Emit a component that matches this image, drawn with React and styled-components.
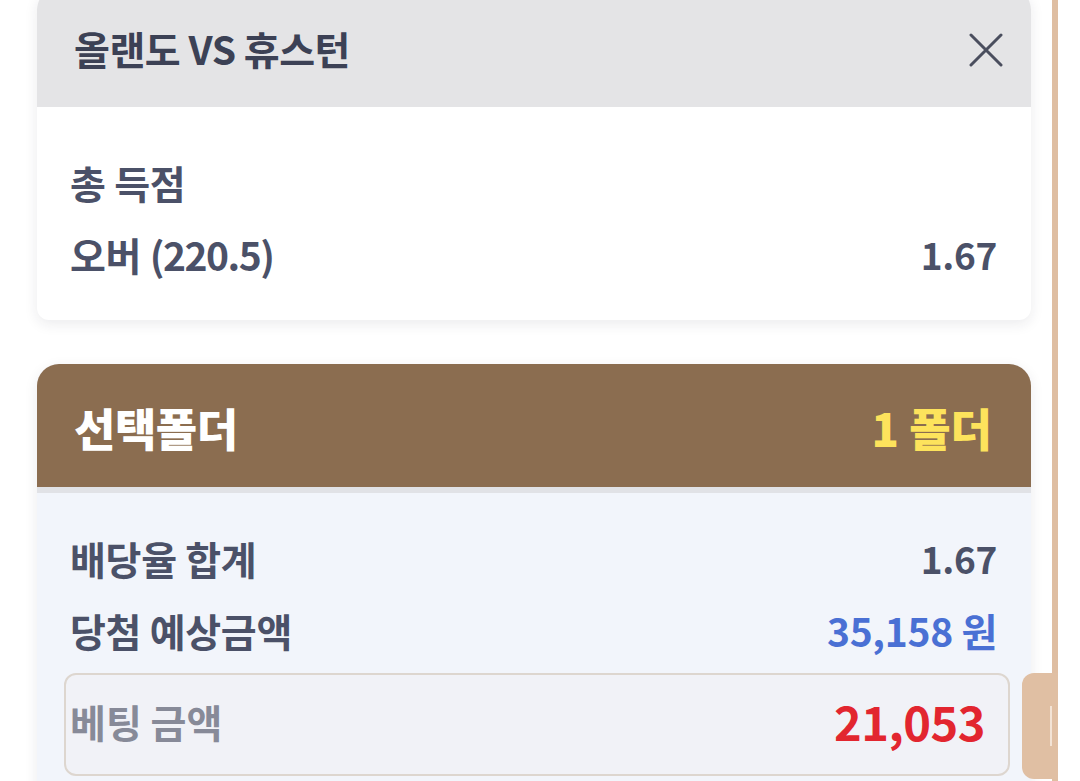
import React from "react";
import styled, { createGlobalStyle } from "styled-components";

const GlobalStyle = createGlobalStyle`
  html, body { margin: 0; padding: 0; background: #ffffff; }
  body { font-family: "Noto Sans CJK KR", "Noto Sans", sans-serif; }
  * { box-sizing: border-box; }
`;

const Page = styled.div`
  display: flex;
  width: 1080px;
  height: 781px;
  overflow: hidden;
  background: #ffffff;
`;

const Column = styled.div`
  width: 1052px;
  flex: none;
  padding: 0 21px 0 37px;
  display: flex;
  flex-direction: column;
  gap: 44px;
`;

const Rail = styled.div`
  width: 6px;
  flex: none;
  background: #dfbea2;
`;

const Card = styled.section`
  background: ${(p) => p.$bg || "#ffffff"};
  border-radius: ${(p) => p.$radius};
  box-shadow: 0 4px 14px rgba(30, 35, 60, 0.09);
  margin-top: ${(p) => p.$mt || "0"};
`;

const MatchHeader = styled.header`
  height: 119px;
  padding: 0 28px 0 37px;
  background: #e4e4e6;
  border-radius: 22px 22px 0 0;
  display: flex;
  align-items: center;
  justify-content: space-between;
`;

const MatchTitle = styled.h2`
  margin: 0;
  font-size: 39px;
  font-weight: 700;
  color: #3c4155;
  letter-spacing: -0.5px;
`;

const CloseButton = styled.button`
  border: 0;
  background: transparent;
  padding: 0;
  width: 34px;
  height: 34px;
  display: flex;
  margin-top: 4px;
`;

const Body = styled.div`
  height: ${(p) => p.$h};
  padding: ${(p) => p.$pad};
  display: flex;
  flex-direction: column;
  gap: 32px;
`;

const Row = styled.div`
  display: flex;
  justify-content: space-between;
  align-items: center;
  height: 40px;
  font-size: 39px;
  font-weight: 700;
  color: #4b5168;
  letter-spacing: -0.3px;
`;

const Numbers = styled.span`
  letter-spacing: -1.5px;
`;

const Value = styled.span`
  color: ${(p) => p.$color || "#4b5168"};
  font-size: ${(p) => p.$size || "37px"};
`;

const FolderHeader = styled.header`
  height: 129px;
  padding: 4px 39px 0 37px;
  background: #8b6d50;
  border-radius: 22px 22px 0 0;
  border-bottom: 6px solid #e1e2e6;
  display: flex;
  align-items: center;
  justify-content: space-between;
`;

const FolderTitle = styled.h2`
  margin: 0;
  font-size: 45px;
  font-weight: 900;
  color: #ffffff;
  letter-spacing: -0.5px;
`;

const FolderCount = styled.span`
  font-size: 45px;
  font-weight: 900;
  color: #fde35c;
`;

const InputRow = styled.div`
  display: flex;
  align-items: stretch;
  margin: -9px -13px 0 -6px;
  gap: 12px;
`;

const AmountBox = styled.div`
  flex: 1;
  height: 103px;
  border: 2px solid #ddd6cf;
  border-radius: 12px;
  background: #f1f2f7;
  padding: 0 23px 8px 4px;
  display: flex;
  align-items: center;
  justify-content: space-between;
`;

const AmountLabel = styled.span`
  font-size: 39px;
  font-weight: 700;
  color: #878a98;
`;

const AmountValue = styled.span`
  font-size: 47px;
  font-weight: 700;
  color: #e2262f;
  letter-spacing: -0.5px;
`;

const SideButton = styled.div`
  flex: none;
  width: 36px;
  height: 106px;
  margin-right: -48px;
  background: #e0bfa3;
  border-radius: 12px 0 0 12px;
  position: relative;
  z-index: 1;
  display: flex;
  align-items: center;
  justify-content: flex-end;
  padding-right: 6px;
`;

const Caret = styled.span`
  width: 2px;
  height: 40px;
  background: #f3e3d5;
`;

export default function App() {
  return (
    <>
      <GlobalStyle />
      <Page>
        <Column>
          <Card $radius="22px 22px 12px 12px" $mt="-12px">
            <MatchHeader>
              <MatchTitle>올랜도 VS 휴스턴</MatchTitle>
              <CloseButton aria-label="닫기">
                <svg width="34" height="34" viewBox="0 0 34 34">
                  <path d="M2 2 L32 32 M32 2 L2 32" stroke="#4a4e5e" strokeWidth="3" strokeLinecap="round" />
                </svg>
              </CloseButton>
            </MatchHeader>
            <Body $h="213px" $pad="55px 34px 0 33px">
              <Row>총 득점</Row>
              <Row>
                <span>
                  오버 <Numbers>(220.5)</Numbers>
                </span>
                <Value>1.67</Value>
              </Row>
            </Body>
          </Card>
          <Card $radius="22px 22px 0 0" $bg="#f2f5fb">
            <FolderHeader>
              <FolderTitle>선택폴더</FolderTitle>
              <FolderCount>1 폴더</FolderCount>
            </FolderHeader>
            <Body $h="300px" $pad="45px 34px 0 33px">
              <Row>
                <span>배당율 합계</span>
                <Value>1.67</Value>
              </Row>
              <Row>
                <span>당첨 예상금액</span>
                <Value $color="#4a70d4" $size="39px">35,158 원</Value>
              </Row>
              <InputRow>
                <AmountBox>
                  <AmountLabel>베팅 금액</AmountLabel>
                  <AmountValue>21,053</AmountValue>
                </AmountBox>
                <SideButton>
                  <Caret />
                </SideButton>
              </InputRow>
            </Body>
          </Card>
        </Column>
        <Rail />
      </Page>
    </>
  );
}
